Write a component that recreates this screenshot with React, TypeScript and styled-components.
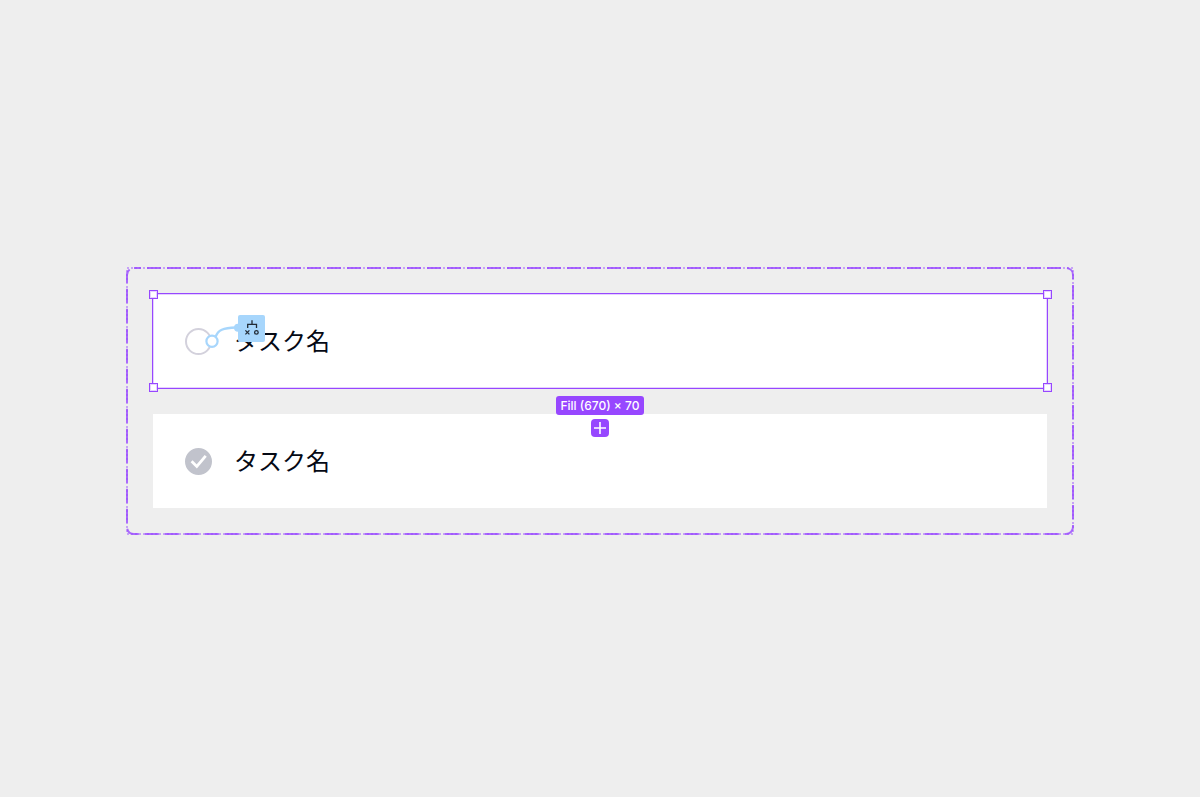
import React from 'react';
import styled, { createGlobalStyle, css } from 'styled-components';

const purple = '#9747ff';
const sky = '#a7d6fc';

const GlobalStyle = createGlobalStyle`
  *, *::before, *::after { box-sizing: border-box; }
  body {
    margin: 0;
    background: #eeeeee;
    font-family: "Noto Sans", "Noto Sans CJK JP", sans-serif;
  }
`;

const Canvas = styled.main`
  min-height: 100vh;
  padding: 4px 126px 0;
  display: flex;
  align-items: center;
`;

const ComponentSet = styled.section`
  position: relative;
  flex: 1;
  display: flex;
  flex-direction: column;
  gap: 26px;
  padding: 27px;
`;

const SetOutline = styled.svg`
  position: absolute;
  inset: 0;
  width: 100%;
  height: 100%;
  pointer-events: none;
`;

const OutlineRect = styled.rect<{ $fine?: boolean }>`
  x: 1px;
  y: 1px;
  width: calc(100% - 2px);
  height: calc(100% - 2px);
  fill: none;
  stroke: ${purple};
  stroke-width: ${(p) => (p.$fine ? 1 : 2)};
  stroke-dasharray: ${(p) => (p.$fine ? '2 2' : '14 6')};
  stroke-dashoffset: ${(p) => (p.$fine ? 0 : 7)};
  stroke-opacity: ${(p) => (p.$fine ? 0.9 : 0.8)};
`;

const Row = styled.div`
  position: relative;
  display: flex;
  align-items: center;
  gap: 22px;
  height: 94px;
  padding: 0 32px;
  background: #ffffff;
`;

const TaskLabel = styled.label`
  padding-bottom: 2px;
  font-family: "Noto Sans CJK JP", sans-serif;
  font-size: 24px;
  line-height: 36px;
  color: #050914;
`;

const CheckWrap = styled.span`
  position: relative;
  display: flex;
  width: 27px;
  height: 27px;
  margin-top: 1px;
`;

const Checkbox = styled.input`
  appearance: none;
  margin: 0;
  width: 27px;
  height: 27px;
  border: 2px solid #d3d1dc;
  border-radius: 50%;
  &:checked {
    border-color: #c1c3cc;
    background: #c1c3cc;
  }
  &:checked + svg { display: block; }
`;

const Tick = styled.svg`
  display: none;
  position: absolute;
  inset: 0;
  pointer-events: none;
`;

const Selection = styled.div`
  position: absolute;
  inset: -1px;
  border: 1px solid ${purple};
  outline: 1px solid rgba(151, 71, 255, 0.25);
  outline-offset: -2px;
  pointer-events: none;
`;

const Handle = styled.span<{ $v: 'top' | 'bottom'; $h: 'left' | 'right' }>`
  position: absolute;
  width: 9px;
  height: 9px;
  border: 1px solid ${purple};
  outline: 1px solid rgba(151, 71, 255, 0.25);
  outline-offset: -2px;
  background: #ffffff;
  ${(p) => css`
    ${p.$v}: -4px;
    ${p.$h}: ${p.$h === 'right' ? '-5px' : '-4px'};
  `}
`;

const Connector = styled.svg`
  position: absolute;
  left: 50px;
  top: 18px;
  pointer-events: none;
`;

const SelectionInfo = styled.div`
  position: absolute;
  z-index: 1;
  top: 100%;
  left: 0;
  right: 0;
  padding-top: 8px;
  display: flex;
  flex-direction: column;
  align-items: center;
  gap: 4px;
`;

const SizeTag = styled.span`
  padding: 0 5px;
  border-radius: 3px;
  background: ${purple};
  color: #ffffff;
  font-family: Inter, sans-serif;
  font-size: 12px;
  font-weight: 500;
  line-height: 19px;
  white-space: nowrap;
`;

const AddButton = styled.button`
  display: flex;
  width: 18px;
  height: 18px;
  padding: 0;
  border: 0;
  border-radius: 4px;
  background: ${purple};
`;

function TaskRow({ id, checked, children }: { id: string; checked?: boolean; children?: React.ReactNode }) {
  return (
    <Row>
      <CheckWrap>
        <Checkbox id={id} type="checkbox" defaultChecked={checked} />
        <Tick width="27" height="27" viewBox="0 0 27 27" aria-hidden="true">
          <path d="M6.6 13.2 11.8 18.4 20.7 7.8" fill="none" stroke="#fff" strokeWidth="2.8" />
        </Tick>
      </CheckWrap>
      <TaskLabel htmlFor={id}>タスク名</TaskLabel>
      {children}
    </Row>
  );
}

function InteractionLink() {
  return (
    <Connector width="66" height="36" viewBox="0 0 66 36" aria-hidden="true">
      <path d="M12.5 25C15 18 20 15.8 33 15.5" fill="none" stroke={sky} strokeWidth="2.4" />
      <circle cx="9" cy="29.3" r="5.6" fill="#fff" stroke={sky} strokeWidth="2.2" />
      <circle cx="35" cy="15.8" r="4" fill={sky} />
      <rect x="35" y="3" width="27" height="27" rx="2" fill={sky} />
      <g fill="none" stroke="#222b35" strokeWidth="1.3">
        <path d="M49 8.3V12.3M44.7 16V12.3H53.5V16" />
        <path d="M42.4 18.4 46.4 22.4M46.4 18.4 42.4 22.4" />
        <circle cx="53.4" cy="20.4" r="1.8" />
      </g>
    </Connector>
  );
}

export default function App() {
  return (
    <>
      <GlobalStyle />
      <Canvas>
        <ComponentSet>
          <SetOutline aria-hidden="true">
            <OutlineRect rx="7" />
            <OutlineRect $fine />
          </SetOutline>
          <TaskRow id="task-open">
            <Selection>
              <Handle $v="top" $h="left" />
              <Handle $v="top" $h="right" />
              <Handle $v="bottom" $h="left" />
              <Handle $v="bottom" $h="right" />
            </Selection>
            <InteractionLink />
            <SelectionInfo>
              <SizeTag>Fill (670) × 70</SizeTag>
              <AddButton type="button" aria-label="Add variant">
                <svg width="18" height="18" viewBox="0 0 18 18" aria-hidden="true">
                  <path d="M9 3V15M3 9H15" stroke="#fff" strokeWidth="1.6" />
                </svg>
              </AddButton>
            </SelectionInfo>
          </TaskRow>
          <TaskRow id="task-done" checked />
        </ComponentSet>
      </Canvas>
    </>
  );
}
